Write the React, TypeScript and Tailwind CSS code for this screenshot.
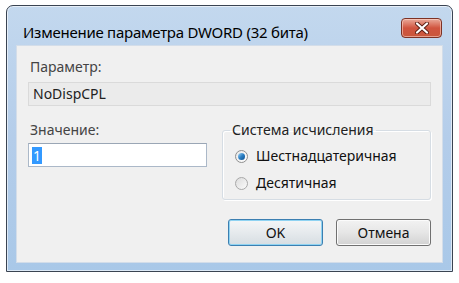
export default function App() {
  const ui = { fontFamily: '"Noto Sans", "Open Sans", sans-serif' };

  return (
    <div className="w-[459px] h-[283px] bg-white overflow-hidden pt-[5px]" style={ui}>
      {/* Window */}
      <div className="ml-[6px] w-[447px] h-[267px] flex flex-col rounded-t-[7px] border border-[#3a4452] bg-gradient-to-b from-[#c3d8ee] via-[#b4cdea] to-[#a9c8e8] shadow-[inset_0_0_0_1px_rgba(255,255,255,0.6)]">
        {/* Title bar */}
        <div className="h-[39px] flex items-start pl-[16px] pr-[10px]">
          <div className="mt-[16px] text-[15px] leading-[20px] text-black tracking-[-0.25px]">
            Изменение параметра DWORD (32 бита)
          </div>
          <button
            type="button"
            className="ml-auto mt-[12px] w-[41px] h-[20px] rounded-[4px] border border-[#7d3225] bg-gradient-to-b from-[#e9a99a] via-[#d0543f] to-[#c9573c] shadow-[inset_0_0_0_1px_rgba(255,220,210,0.55)] flex items-center justify-center"
          >
            <svg width="14" height="12" viewBox="0 0 14 12">
              <path d="M2 1.5 L12 10.5 M12 1.5 L2 10.5" stroke="#5a1e14" strokeWidth="4" strokeLinecap="round" />
              <path d="M2 1.5 L12 10.5 M12 1.5 L2 10.5" stroke="#ffffff" strokeWidth="2.2" strokeLinecap="round" />
            </svg>
          </button>
        </div>

        {/* Client area */}
        <div className="mx-[9px] mb-[8px] flex-1 bg-[#f0f0f0] border border-[#d3dde9] px-[11px] pt-[13px] text-[14px] leading-[16px]">
          <div className="pl-[2px] text-[#444]">Параметр:</div>
          <div className="mt-[7px] h-[24px] bg-[#ebebeb] border border-[#dadada] flex items-center pl-[4px] text-[#222]">
            NoDispCPL
          </div>

          <div className="mt-[16px] flex">
            <div className="w-[179px]">
              <div className="pl-[2px] text-[#444]">Значение:</div>
              <div className="mt-[5px] h-[24px] bg-white border border-[#abb8c8] border-t-[#9aa6b5] flex items-center pl-[3px]">
                <span className="bg-[#3399ff] text-white leading-[17px] px-[1px]">1</span>
              </div>
            </div>

            <fieldset className="ml-auto w-[209px] h-[78px] border border-[#d6dde4] rounded-[3px] shadow-[inset_1px_1px_0_#ffffff,1px_1px_0_#ffffff] px-[7px]">
              <legend className="px-[2px] text-[#222] leading-[16px]">Система исчисления</legend>
              <div className="flex flex-col gap-[11px] mt-[10px] pl-[5px]">
                <label className="flex items-center gap-[8px] text-[#111]">
                  <span className="w-[13px] h-[13px] rounded-full border border-[#8f8f8f] bg-gradient-to-br from-[#e8e8e8] to-[#ffffff] flex items-center justify-center">
                    <span className="w-[7px] h-[7px] rounded-full bg-gradient-to-br from-[#9fd6f7] via-[#2a7fc3] to-[#0f4f8f]" />
                  </span>
                  Шестнадцатеричная
                </label>
                <label className="flex items-center gap-[8px] text-[#111]">
                  <span className="w-[13px] h-[13px] rounded-full border border-[#a8a8a8] bg-gradient-to-br from-[#dcdcdc] to-[#fbfbfb]" />
                  Десятичная
                </label>
              </div>
            </fieldset>
          </div>

          <div className="mt-[19px] flex justify-end gap-[13px]">
            <button
              type="button"
              className="w-[95px] h-[27px] rounded-[3px] border border-[#3c7fb1] bg-gradient-to-b from-[#f4f6f7] via-[#e6eaed] to-[#d6dde2] shadow-[inset_0_0_0_1px_#8fd3f2] text-[#111]"
            >
              OK
            </button>
            <button
              type="button"
              className="w-[95px] h-[27px] rounded-[3px] border border-[#707070] bg-gradient-to-b from-[#f2f2f2] via-[#e6e6e6] to-[#d2d2d2] shadow-[inset_0_0_0_1px_#fbfbfb] text-[#111]"
            >
              Отмена
            </button>
          </div>
        </div>
      </div>
    </div>
  );
}
